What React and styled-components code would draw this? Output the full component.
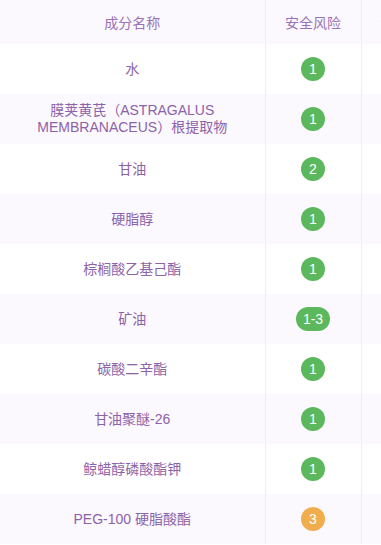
import React from 'react';
import styled, {createGlobalStyle} from "styled-components";

const GlobalStyle = createGlobalStyle`
  html, body {
    margin: 0;
    padding: 0;
    background: #ffffff;
    overflow: hidden;
    font-family: "Liberation Sans", "Noto Sans CJK SC", sans-serif;
  }
`;

const Wrapper = styled.div`
  width: 381px;
  height: 545px;
  overflow: hidden;
`;

const Table = styled.table`
  width: 500px;
  table-layout: fixed;
  border-collapse: collapse;
  border-spacing: 0;
`;

const HeadCell = styled.th`
  height: 44px;
  padding: ${p => p.$accent ? '0 0 0 19px' : '0 10px'};
  font-weight: normal;
  font-size: 14px;
  color: ${p => p.$accent ? '#e8734a' : '#9a72b4'};
  text-align: ${p => p.$accent ? 'left' : 'center'};
  border-right: 1px solid #efedf2;
  background: #fbf8fe;
  white-space: nowrap;
`;

const Row = styled.tr`
  height: 50px;
  background: ${p => p.$tinted ? '#fbf8fe' : '#ffffff'};
`;

const Cell = styled.td`
  padding: 0 10px;
  font-size: 14px;
  line-height: 17px;
  color: #8d63a7;
  text-align: center;
  border-right: 1px solid #efedf2;
`;

const Badge = styled.span`
  display: inline-flex;
  align-items: center;
  justify-content: center;
  min-width: 24px;
  height: 24px;
  padding: 0 ${p => p.$wide ? '7px' : '0'};
  box-sizing: border-box;
  border-radius: 12px;
  background: ${p => p.$level === 'high' ? '#f0ad4e' : '#5cb85c'};
  color: #fff;
  font-size: 14px;
  vertical-align: middle;
`;

const rows = [
    {name: '水', risk: '1'},
    {name: '膜荚黄芪（ASTRAGALUS MEMBRANACEUS）根提取物', risk: '1'},
    {name: '甘油', risk: '2'},
    {name: '硬脂醇', risk: '1'},
    {name: '棕榈酸乙基己酯', risk: '1'},
    {name: '矿油', risk: '1-3'},
    {name: '碳酸二辛酯', risk: '1'},
    {name: '甘油聚醚-26', risk: '1'},
    {name: '鲸蜡醇磷酸酯钾', risk: '1'},
    {name: 'PEG-100 硬脂酸酯', risk: '3'},
];

const App = () => {
    return (
        <Wrapper>
            <GlobalStyle/>
            <Table>
                <colgroup>
                    <col style={{width: 265}}/>
                    <col style={{width: 96}}/>
                    <col/>
                </colgroup>
                <thead>
                <tr>
                    <HeadCell>成分名称</HeadCell>
                    <HeadCell>安全风险</HeadCell>
                    <HeadCell $accent>活性成分</HeadCell>
                </tr>
                </thead>
                <tbody>
                {rows.map((r, i) => (
                    <Row key={r.name} $tinted={i % 2 === 1}>
                        <Cell>{r.name}</Cell>
                        <Cell>
                            <Badge $wide={r.risk.length > 1} $level={r.risk === '3' ? 'high' : 'low'}>
                                {r.risk}
                            </Badge>
                        </Cell>
                        <Cell/>
                    </Row>
                ))}
                </tbody>
            </Table>
        </Wrapper>
    );
};

export default App;
